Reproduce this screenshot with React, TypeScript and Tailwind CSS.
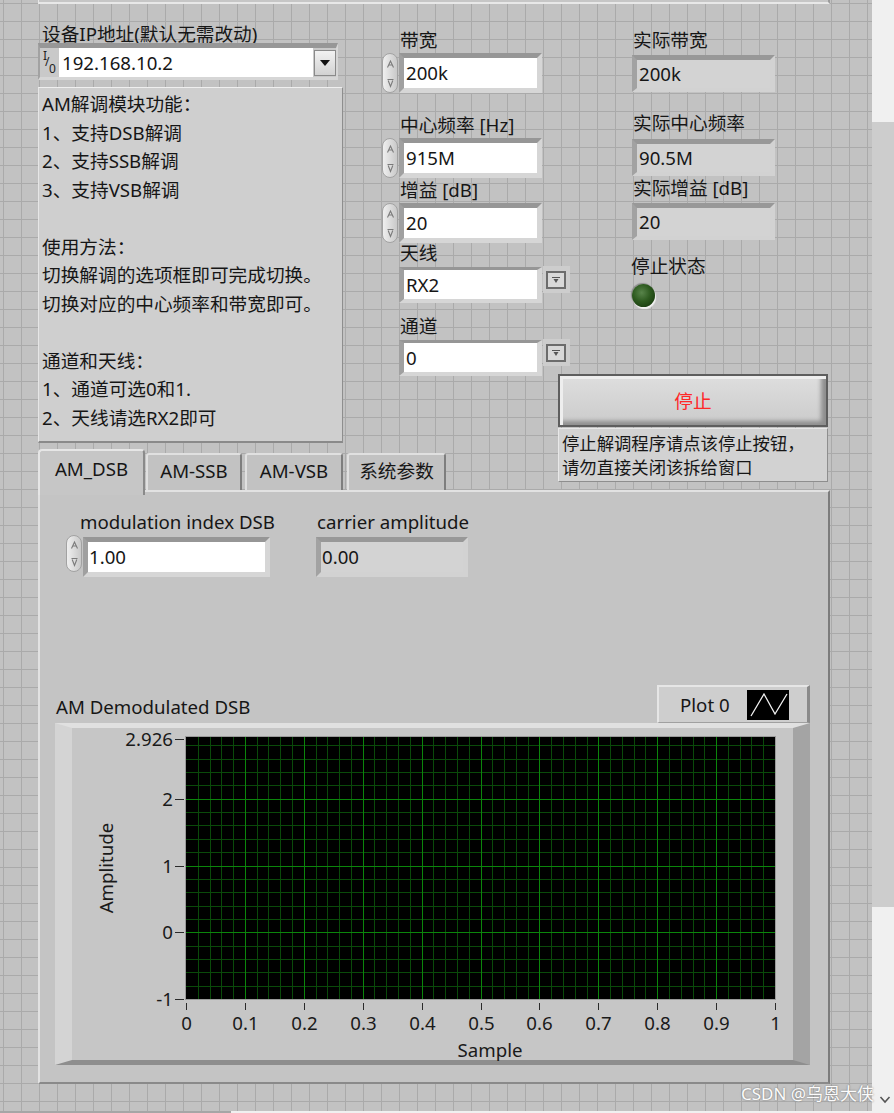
import React from "react";

function Spin({ small }: { small?: boolean }) {
  return (
    <div
      className={`flex w-[16px] flex-none flex-col items-center justify-around rounded-[8px] border border-[#a2a2a2] bg-[linear-gradient(to_right,#efefef,#c9c9c9)] ${
        small ? "h-[37px]" : "h-[40px]"
      }`}
    >
      <svg width="9" height="10" viewBox="0 0 9 10">
        <path d="M1.5 8.5 L4.5 2 L7.5 8.5 M3 6 H6" fill="none" stroke="#7a7a7a" strokeWidth="1.1" />
      </svg>
      <svg width="9" height="10" viewBox="0 0 9 10">
        <path d="M1.5 1.5 H7.5 M2.2 2.5 L4.5 8.5 L6.8 2.5" fill="none" stroke="#7a7a7a" strokeWidth="1.1" />
      </svg>
    </div>
  );
}

function Numeric({ value }: { value: string }) {
  return (
    <div className="flex items-start">
      <Spin />
      <div className="ml-[1px] h-[40px] w-[143px] border-[5px] border-t-[#969696] border-l-[#a0a0a0] border-r-[#d6d6d6] border-b-[#d6d6d6] bg-white">
        <div className="flex h-full items-center pl-[2px] leading-[20px]">{value}</div>
      </div>
    </div>
  );
}

function Indicator({ value }: { value: string }) {
  return (
    <div className="h-[37px] w-[143px] border-[5px] border-b-[4px] border-t-[#989898] border-l-[#a2a2a2] border-r-[#d2d2d2] border-b-[#d2d2d2] bg-[#d3d3d3]">
      <div className="flex h-full items-center pl-[2px] leading-[20px]">{value}</div>
    </div>
  );
}

function RingButton() {
  return (
    <div className="ml-[1px] mt-[-1px] flex h-[27px] w-[27px] flex-none items-start bg-[#cdcdcd] pl-[3px] pt-[5px]">
      <div className="flex h-[18px] w-[20px] items-center justify-center border-2 border-[#6c6c6c] bg-[#d8d8d8]">
        <svg width="10" height="8" viewBox="0 0 10 8">
          <path d="M1 1.5 H9" stroke="#555" strokeWidth="1" />
          <path d="M2.5 3 L7.5 3 L5 7 Z" fill="#555" />
        </svg>
      </div>
    </div>
  );
}

function Ring({ value }: { value: string }) {
  return (
    <div className="flex items-start">
      <div className="w-[17px] flex-none" />
      <div className="h-[36px] w-[143px] flex-none border-[5px] border-t-[3px] border-b-[4px] border-t-[#969696] border-l-[#a0a0a0] border-r-[#d6d6d6] border-b-[#d6d6d6] bg-white">
        <div className="flex h-full items-center pl-[2px] leading-[20px]">{value}</div>
      </div>
      <RingButton />
    </div>
  );
}

function Label({ children, className = "" }: { children: React.ReactNode; className?: string }) {
  return <div className={`whitespace-nowrap leading-[20px] ${className}`}>{children}</div>;
}

const infoLines = [
  "AM解调模块功能：",
  "1、支持DSB解调",
  "2、支持SSB解调",
  "3、支持VSB解调",
  "",
  "使用方法：",
  "切换解调的选项框即可完成切换。",
  "切换对应的中心频率和带宽即可。",
  "",
  "通道和天线：",
  "1、通道可选0和1.",
  "2、天线请选RX2即可",
];

function Chart() {
  const X0 = 114;
  const Y0 = 9;
  const W = 589;
  const H = 262;
  const ppu = H / 3.926;
  const yOf = (v: number) => Y0 + (2.926 - v) * ppu;
  const minorC = "#0a4a0a";
  const majorC = "#0b850b";
  const minor: React.ReactElement[] = [];
  const major: React.ReactElement[] = [];
  for (let i = 1; i < 50; i++) {
    const x = Math.round(X0 + (W * i) / 50) + 0.5;
    const el = (
      <line key={`v${i}`} x1={x} y1={Y0} x2={x} y2={Y0 + H} stroke={i % 5 === 0 ? majorC : minorC} strokeWidth="1" />
    );
    (i % 5 === 0 ? major : minor).push(el);
  }
  for (let i = 1; i < 20; i++) {
    const v = -1 + 0.2 * i;
    const y = Math.round(yOf(v)) + 0.5;
    const el = (
      <line key={`h${i}`} x1={X0} y1={y} x2={X0 + W} y2={y} stroke={i % 5 === 0 ? majorC : minorC} strokeWidth="1" />
    );
    (i % 5 === 0 ? major : minor).push(el);
  }
  const yLabels: [number, string][] = [
    [2.926, "2.926"],
    [2, "2"],
    [1, "1"],
    [0, "0"],
    [-1, "-1"],
  ];
  const xLabels = ["0", "0.1", "0.2", "0.3", "0.4", "0.5", "0.6", "0.7", "0.8", "0.9", "1"];
  return (
    <svg width="721" height="332" viewBox="0 0 721 332" className="block overflow-visible">
      <rect x={X0} y={Y0} width={W} height={H} fill="#000" />
      <g shapeRendering="crispEdges">
        {minor}
        {major}
        <rect x={X0 - 0.5} y={Y0 - 0.5} width={W + 1} height={H + 1} fill="none" stroke="#9a9a9a" strokeWidth="1" />
      </g>
      {yLabels.map(([v, t], i) => {
        const y = i === 0 ? Y0 + 2.5 : Math.round(yOf(v)) + 0.5;
        return (
          <g key={t}>
            <line x1={103} y1={y} x2={112} y2={y} stroke="#2a2a2a" strokeWidth="1.2" shapeRendering="crispEdges" />
            <text x={101} y={y + 6.5} textAnchor="end" fontSize="18.67" fill="#1a1a1a">
              {t}
            </text>
          </g>
        );
      })}
      {xLabels.map((t, k) => {
        const x = Math.round(X0 + (W * k) / 10) + 0.5;
        return (
          <g key={t}>
            <line x1={x} y1={275} x2={x} y2={282} stroke="#2a2a2a" strokeWidth="1.2" shapeRendering="crispEdges" />
            <text x={x} y={302} textAnchor="middle" fontSize="18.67" fill="#1a1a1a">
              {t}
            </text>
          </g>
        );
      })}
      <text x={418} y={329} textAnchor="middle" fontSize="18.67" fill="#1a1a1a">
        Sample
      </text>
      <text x={41} y={140} textAnchor="middle" fontSize="18.67" fill="#1a1a1a" transform="rotate(-90 41 140)">
        Amplitude
      </text>
    </svg>
  );
}

export default function App() {
  return (
    <div className="relative flex h-[1113px] w-[894px] flex-col overflow-hidden bg-[#f0f0f0] font-['Noto_Sans','Noto_Sans_CJK_SC',sans-serif] text-[18.67px] text-[#161616]">
      <div className="flex h-[1111px] flex-none">
        {/* LabVIEW front panel canvas */}
        <div className="h-full w-[872px] flex-none bg-[#c2c2c2] bg-[linear-gradient(to_right,#aaaaaa_1px,transparent_1px),linear-gradient(to_bottom,#aaaaaa_1px,transparent_1px)] bg-[length:18px_18px] bg-[position:3px_3px]">
          {/* remnant of panel above */}
          <div className="ml-[38px] h-[4px] w-[792px] border-b-[2px] border-r-[2px] border-l-[1px] border-b-[#e8e8e8] border-r-[#9c9c9c] border-l-[#e8e8e8] bg-[#c6c6c6]" />

          {/* top row */}
          <div className="flex h-[445px] items-start">
            {/* column 1 */}
            <div className="ml-[38px] flex w-[305px] flex-none flex-col">
              <Label className="mt-[20px] pl-[4px]">设备IP地址(默认无需改动)</Label>
              <div className="mt-[-1px] flex h-[37px] w-[300px] items-stretch border-l-[2px] border-r-[2px] border-t-[5px] border-b-[3px] border-t-[#979797] border-l-[#a2a2a2] border-r-[#d6d6d6] border-b-[#d6d6d6] bg-[#c9c9c9]">
                <div className="relative w-[19px] flex-none text-[12px] leading-none text-[#222]">
                  <span className="absolute left-[3px] top-[2px]">I</span>
                  <span className="absolute left-[5px] top-[8px]">/</span>
                  <span className="absolute left-[9px] top-[15px]">0</span>
                </div>
                <div className="flex w-[254px] flex-none items-center bg-white pl-[3px] leading-[20px]">192.168.10.2</div>
                <div className="ml-[1px] flex w-[22px] flex-none items-center">
                  <div className="flex h-[26px] w-[22px] items-center justify-center border border-[#8a8a8a] bg-[linear-gradient(to_bottom,#f2f2f2,#d2d2d2)]">
                    <svg width="10" height="6" viewBox="0 0 10 6">
                      <path d="M0 0 H10 L5 6 Z" fill="#111" />
                    </svg>
                  </div>
                </div>
              </div>
              <div className="mt-[7px] h-[356px] w-[305px] border border-b-[2px] border-t-[#efefef] border-l-[#e6e6e6] border-r-[#8e8e8e] border-b-[#8a8a8a] bg-[#cfcfcf] pl-[3px] pt-[2px]">
                {infoLines.map((l, i) => (
                  <div key={i} className="h-[28.5px] whitespace-nowrap leading-[28.5px]">
                    {l}
                  </div>
                ))}
              </div>
            </div>

            {/* column 2 */}
            <div className="ml-[39px] flex w-[176px] flex-none flex-col">
              <Label className="mt-[26px] pl-[18px]">带宽</Label>
              <div className="mt-[3px]">
                <Numeric value="200k" />
              </div>
              <Label className="mt-[22px] pl-[18px]">中心频率 [Hz]</Label>
              <div className="mt-[3px]">
                <Numeric value="915M" />
              </div>
              <Label className="mt-[2px] pl-[18px]">增益 [dB]</Label>
              <div className="mt-[3px]">
                <Numeric value="20" />
              </div>
              <Label className="pl-[18px]">天线</Label>
              <div className="mt-[4px]">
                <Ring value="RX2" />
              </div>
              <Label className="mt-[13px] pl-[18px]">通道</Label>
              <div className="mt-[4px]">
                <Ring value="0" />
              </div>
            </div>

            {/* column 3 */}
            <div className="flex w-[270px] flex-none flex-col">
              <Label className="mt-[26px] pl-[75px]">实际带宽</Label>
              <div className="ml-[74px] mt-[5px]">
                <Indicator value="200k" />
              </div>
              <Label className="mt-[21px] pl-[75px]">实际中心频率</Label>
              <div className="ml-[74px] mt-[6px]">
                <Indicator value="90.5M" />
              </div>
              <Label className="mt-[2px] pl-[75px]">实际增益 [dB]</Label>
              <div className="ml-[74px] mt-[5px]">
                <Indicator value="20" />
              </div>
              <Label className="mt-[16px] pl-[73px]">停止状态</Label>
              <div className="ml-[74px] mt-[8px] h-[23px] w-[23px] rounded-full bg-[radial-gradient(circle_at_42%_38%,#58844a_0%,#2d5a1f_45%,#173a0e_85%)] shadow-[1px_2px_1px_#f2f2f2,-1px_-1px_1px_#8a8a8a]" />
              <div className="mt-[67px] flex h-[53px] w-[270px] items-center justify-center border-2 border-[#5e5e5e] bg-[linear-gradient(to_bottom,#dedede,#cbcbcb)] text-[#ff2828] shadow-[inset_3px_3px_0_#eeeeee,inset_-5px_-4px_4px_#8e8e8e]">
                停止
              </div>
              <div className="mt-[1px] h-[54px] w-[270px] border border-t-[#e8e8e8] border-l-[#e8e8e8] border-r-[#8e8e8e] border-b-[#8e8e8e] bg-[#d2d2d2] pl-[3px] pt-[2px] text-[17.33px] leading-[24px]">
                <div className="whitespace-nowrap">停止解调程序请点该停止按钮，</div>
                <div className="whitespace-nowrap">请勿直接关闭该拆给窗口</div>
              </div>
            </div>
          </div>

          {/* tab control */}
          <div className="ml-[38px] w-[792px]">
            <div className="flex h-[41px] items-end">
              <div className="relative z-10 mb-[-5px] flex h-[46px] w-[107px] justify-center rounded-t-[4px] border-l-2 border-t-2 border-r-2 border-l-[#e6e6e6] border-t-[#e6e6e6] border-r-[#8a8a8a] bg-[#c6c6c6] pt-[8px] leading-[20px]">
                AM_DSB
              </div>
              <div className="ml-[1px] flex h-[37px] w-[96px] justify-center rounded-t-[3px] border-l-2 border-t-2 border-r-2 border-l-[#e0e0e0] border-t-[#e0e0e0] border-r-[#7e7e7e] bg-[#c2c2c2] pt-[6px] leading-[20px]">
                AM-SSB
              </div>
              <div className="ml-[3px] flex h-[37px] w-[98px] justify-center rounded-t-[3px] border-l-2 border-t-2 border-r-2 border-l-[#e0e0e0] border-t-[#e0e0e0] border-r-[#7e7e7e] bg-[#c2c2c2] pt-[6px] leading-[20px]">
                AM-VSB
              </div>
              <div className="ml-[4px] flex h-[37px] w-[99px] justify-center rounded-t-[3px] border-l-2 border-t-2 border-r-2 border-l-[#e0e0e0] border-t-[#e0e0e0] border-r-[#7e7e7e] bg-[#c2c2c2] pt-[6px] leading-[20px]">
                系统参数
              </div>
            </div>
            <div className="flex h-[594px] flex-col border-2 border-l-[#e2e2e2] border-t-[#e2e2e2] border-r-[#7c7c7c] border-b-[#8a8a8a] bg-[#c4c4c4]">
              {/* controls */}
              <div className="ml-[26px] mt-[20px] flex items-start">
                <div className="flex w-[204px] flex-none flex-col">
                  <Label className="pl-[14px]">modulation index DSB</Label>
                  <div className="mt-[3px] flex items-start">
                    <Spin small />
                    <div className="ml-[1px] mt-[2px] h-[40px] w-[188px] border-[5px] border-t-[#969696] border-l-[#a0a0a0] border-r-[#d6d6d6] border-b-[#d6d6d6] bg-white">
                      <div className="flex h-full items-center pl-[1px] leading-[20px]">1.00</div>
                    </div>
                  </div>
                </div>
                <div className="ml-[46px] flex flex-col">
                  <Label className="pl-[1px]">carrier amplitude</Label>
                  <div className="mt-[5px] h-[40px] w-[152px] border-[5px] border-t-[#989898] border-l-[#a2a2a2] border-r-[#d2d2d2] border-b-[#d2d2d2] bg-[#d3d3d3]">
                    <div className="flex h-full items-center pl-[1px] leading-[20px]">0.00</div>
                  </div>
                </div>
              </div>

              {/* graph */}
              <div className="ml-[15px] mt-[108px] w-[755px]">
                <div className="flex h-[38px] items-end justify-between">
                  <Label className="mb-[6px] ml-[1px]">AM Demodulated DSB</Label>
                  <div className="flex h-[38px] w-[153px] items-center border-l-2 border-t-2 border-r-[3px] border-b border-l-[#e6e6e6] border-t-[#e6e6e6] border-r-[#8a8a8a] border-b-[#a0a0a0] bg-[#cecece] pl-[21px]">
                    <span className="leading-[20px]">Plot 0</span>
                    <div className="ml-[17px] h-[30px] w-[42px] bg-black">
                      <svg width="42" height="30" viewBox="0 0 42 30">
                        <polyline points="4,26 17,4 28,24 40,4" fill="none" stroke="#f0f0f0" strokeWidth="1.3" />
                      </svg>
                    </div>
                  </div>
                </div>
                <div className="h-[342px] w-[755px] border-l-[17px] border-t-[5px] border-r-[17px] border-b-[5px] border-l-[#d4d4d4] border-t-[#e0e0e0] border-r-[#a4a4a4] border-b-[#8e8e8e] bg-[#c6c6c6]">
                  <Chart />
                </div>
              </div>
            </div>
          </div>
        </div>

        {/* vertical scrollbar */}
        <div className="flex w-[22px] flex-none flex-col bg-[#f0f0f0]">
          <div className="mt-[122px] h-[785px] bg-[#cdcdcd]" />
        </div>
      </div>

      {/* horizontal scrollbar strip */}
      <div className="flex h-[2px] flex-none">
        <div className="w-[231px] bg-[#a6a6a6]" />
      </div>

      {/* watermark overlay */}
      <div className="absolute left-[741px] top-[1083px] whitespace-nowrap text-[17px] leading-[22px] text-[#fbfbfb] [text-shadow:0_0_2px_#6a6a6a]">
        CSDN @乌恩大侠
      </div>
      <svg className="absolute left-[879px] top-[1095px]" width="12" height="9" viewBox="0 0 12 9">
        <path d="M1.5 2 L6 7 L10.5 2" fill="none" stroke="#555" strokeWidth="1.6" />
      </svg>
    </div>
  );
}
